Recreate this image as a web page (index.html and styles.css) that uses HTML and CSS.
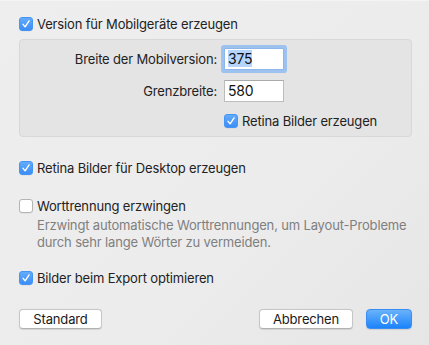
FILE: index.html
```html
<!DOCTYPE html>
<html lang="de">
<head>
    <meta charset="UTF-8">
    <meta name="viewport" content="width=device-width, initial-scale=1.0">
    <title>Export-Einstellungen</title>
    <link rel="stylesheet" href="styles.css">
</head>
<body>
    <div id="dialog">
        <div class="option">
            <span class="check on"><svg viewBox="0 0 14 14"><path d="M3.6 7.4 L6 10.3 L10.6 3.4"/></svg></span>
            <span class="optionText">Version für Mobilgeräte erzeugen</span>
        </div>

        <div id="mobileBox">
            <div class="fieldRow">
                <label class="fieldLabel">Breite der Mobilversion:</label>
                <div class="field focused"><span class="selected">375</span></div>
            </div>
            <div class="fieldRow second">
                <label class="fieldLabel">Grenzbreite:</label>
                <div class="field">580</div>
            </div>
            <div class="fieldRow third">
                <span class="fieldLabel"></span>
                <div class="option">
                    <span class="check on"><svg viewBox="0 0 14 14"><path d="M3.6 7.4 L6 10.3 L10.6 3.4"/></svg></span>
                    <span class="optionText">Retina Bilder erzeugen</span>
                </div>
            </div>
        </div>

        <div class="option spaced">
            <span class="check on"><svg viewBox="0 0 14 14"><path d="M3.6 7.4 L6 10.3 L10.6 3.4"/></svg></span>
            <span class="optionText">Retina Bilder für Desktop erzeugen</span>
        </div>

        <div class="option spaced">
            <span class="check"></span>
            <span class="optionText">Worttrennung erzwingen</span>
        </div>
        <p class="hint">Erzwingt automatische Worttrennungen, um Layout-Probleme<br>durch sehr lange Wörter zu vermeiden.</p>

        <div class="option export">
            <span class="check on"><svg viewBox="0 0 14 14"><path d="M3.6 7.4 L6 10.3 L10.6 3.4"/></svg></span>
            <span class="optionText">Bilder beim Export optimieren</span>
        </div>

        <div id="buttons">
            <button class="btn standard">Standard</button>
            <span class="spacer"></span>
            <button class="btn cancel">Abbrechen</button>
            <button class="btn ok">OK</button>
        </div>
    </div>
</body>
</html>
```

FILE: styles.css
```css
* {
    margin: 0px;
    padding: 0px;
    border: 0px;
    box-sizing: border-box;
}
body, html {
    height: 100%;
}
body {
    background: linear-gradient(135deg, #eeeeee 0%, #ececec 60%, #e6e6e6 100%);
    font-family: Inter, Roboto, "Liberation Sans", sans-serif;
    font-size: 13px;
    letter-spacing: -0.16px;
    color: #222;
}
#dialog {
    display: flex;
    flex-direction: column;
    padding: 16px 17px 0px 19px;
    border-top: 1px solid #f4f4f4;
}
.option {
    display: flex;
    align-items: center;
    height: 14px;
}
.optionText {
    margin-left: 4px;
    line-height: 14px;
    white-space: nowrap;
}
.check {
    width: 14px;
    height: 14px;
    flex: none;
    border-radius: 3px;
    background: #fff;
    border: 1px solid #b4b4b4;
    box-shadow: 0 0.5px 0.5px rgba(0, 0, 0, 0.08);
}
.check.on {
    border: 1px solid #4494f6;
    background: linear-gradient(#64acfa, #3b8ef6);
}
.check svg {
    display: block;
    width: 12px;
    height: 12px;
}
.check path {
    fill: none;
    stroke: #fff;
    stroke-width: 1.6;
    stroke-linecap: round;
    stroke-linejoin: round;
}
#mobileBox {
    margin-top: 8px;
    width: 393px;
    height: 98px;
    padding-top: 8px;
    background-color: #e4e4e4;
    border: 1px solid #d8d8d8;
    border-radius: 4px;
}
.fieldRow {
    display: flex;
    align-items: center;
}
.fieldRow.second {
    margin-top: 10px;
}
.fieldRow.third {
    margin-top: 12px;
}
.fieldLabel {
    width: 197px;
    text-align: right;
    margin-right: 7px;
    white-space: nowrap;
}
.field {
    width: 60px;
    height: 22px;
    line-height: 20px;
    padding-left: 3px;
    font-size: 14px;
    background-color: #fff;
    border: 1px solid #bcbcbc;
    border-top-color: #aaa;
    color: #111;
}
.field.focused {
    border-color: #8db6ea;
    box-shadow: 0 0 0 3px #9dc2ef;
    border-radius: 1px;
}
.selected {
    background-color: #b5d5fd;
    display: inline-block;
    line-height: 17px;
}
.spaced {
    margin-top: 24px;
}
.hint {
    margin: 4px 0px 0px 18px;
    line-height: 17px;
    color: #7f7f7f;
    white-space: nowrap;
}
.export {
    margin-top: 20px;
}
#buttons {
    display: flex;
    margin-top: 24px;
    width: 393px;
}
.spacer {
    flex: 1;
}
.btn {
    height: 20px;
    font-family: inherit;
    font-size: 13px;
    letter-spacing: inherit;
    color: #1a1a1a;
    background-color: #fff;
    border: 1px solid #c6c6c6;
    border-bottom-color: #b0b0b0;
    border-radius: 4px;
    box-shadow: 0 0.5px 1px rgba(0, 0, 0, 0.1);
}
.standard {
    width: 83px;
}
.cancel {
    width: 94px;
}
.ok {
    width: 46px;
    margin-left: 13px;
    color: #fff;
    border: 1px solid #3a8df5;
    background: linear-gradient(#6ab2fa, #1c83fb);
}
```
